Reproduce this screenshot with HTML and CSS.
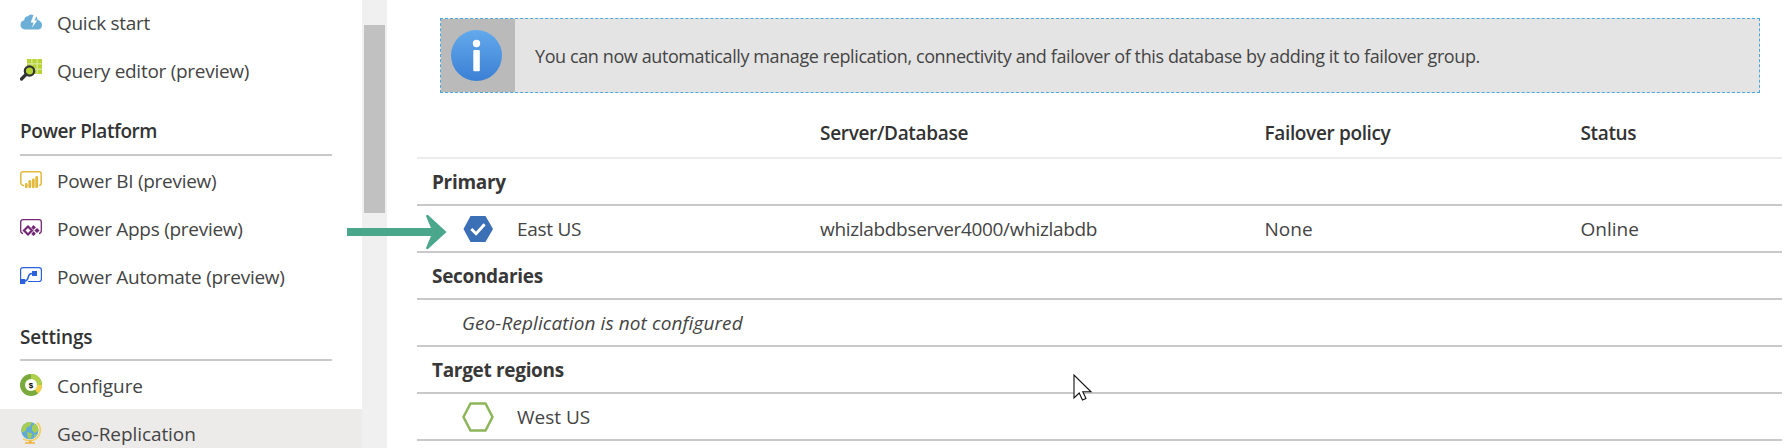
FILE: index.html
```
<!DOCTYPE html>
<html lang="en">
<head>
<meta charset="utf-8">
<title>Geo-Replication</title>
<link rel="stylesheet" href="styles.css">
</head>
<body>
<div class="portal">
  <nav class="sidebar">
    <a class="item"><svg class="icon" viewBox="0 0 22 22"><path fill="#6bafd6" d="M5 18.500a5 4.700 0 0 1-.8-9.200Q4.500 5.500 8 5.300 10 2.500 13 4l2 .2q2.500 1.500 2.600 4.600Q22 10.500 22 14q0 4-3.700 4.500z"/><path fill="#fff" d="M13.500 4 10.700 11.500h3l-2 5.500 5.600-7.600h-2.800L17 4z"/></svg><span>Quick start</span></a>
    <a class="item"><svg class="icon" viewBox="0 0 22 22"><path fill="#d5e58c" d="M7 0h15v15H7z"/><path fill="#b8d432" d="M7 0h4v4H7zM12.500 0h4v4h-4zM18 0h4v4h-4zM7 5.500h4v4H7zM12.500 5.500h4v4h-4zM18 5.500h4v4h-4zM12.500 11h4v4h-4zM18 11h4v4h-4z"/><circle cx="9.500" cy="12" r="4.700" fill="#b5d334" stroke="#333" stroke-width="2.200"/><path d="M6 15.500 1.500 20" stroke="#333" stroke-width="3.200" stroke-linecap="round"/></svg><span>Query editor (preview)</span></a>
    <h2 class="group">Power Platform</h2>
    <a class="item"><svg class="icon" viewBox="0 0 22 22"><path fill="none" stroke="#e3b93c" stroke-width="1.500" d="M4 16.500q-3.200 0-3.200-3V5Q.8 2.800 3 2.800h16q2.200 0 2.200 2.200v8.500q0 3-2 3"/><path fill="none" stroke="#e3b93c" stroke-width="2.800" stroke-linecap="round" d="M6.300 15.500v2.300M9.800 12.500v5.300M13.300 11v6.800M16.700 8.500v9.300"/></svg><span>Power BI (preview)</span></a>
    <a class="item"><svg class="icon" viewBox="0 0 22 22"><path fill="none" stroke="#742774" stroke-width="1.300" d="M3 16.500q-2.300-.3-2.300-3V5Q.7 2.700 3 2.700h16q2.300 0 2.300 2.300v8.500q0 2.700-2.300 3"/><path fill="none" stroke="#742774" stroke-width="2.200" d="m8 9.500 4 4-4 4-4-4z"/><path fill="#742774" d="m13.500 8 2.400 2.400-2.400 2.400-2.200-2.200zM17 10.900l2.600 2.600-2.600 2.600-2.600-2.600zM13.500 14.300l2.400 2.400-2.400 2.400-2.200-2.200z"/></svg><span>Power Apps (preview)</span></a>
    <a class="item"><svg class="icon" viewBox="0 0 22 22"><path fill="none" stroke="#2a62dd" stroke-width="1.200" d="M.6 14V5Q.6 2.700 3 2.700h16q2.400 0 2.400 2.300v9q0 2.500-2.400 2.500H8"/><path fill="none" stroke="#2a62dd" stroke-width="1.500" d="M4 16.500q3.500-.5 4.300-4.500T13 8.500"/><path fill="#2a62dd" d="M12 6h5v5h-5zM0 14h5.200v5H0z"/></svg><span>Power Automate (preview)</span></a>
    <h2 class="group group-settings">Settings</h2>
    <a class="item item-wide"><svg class="icon" viewBox="0 0 22 22"><circle cx="11" cy="11" r="11" fill="#7aa93c"/><path fill="#b0cf4a" d="M11 0a11 11 0 0 1 11 11H11z"/><path fill="#f2d04a" d="M22 11a11 11 0 0 1-4 8.500L11 11z"/><circle cx="11" cy="11" r="6" fill="#fff"/><text x="11" y="14" class="dollar">$</text></svg><span>Configure</span></a>
    <a class="item item-wide item-active"><svg class="icon" viewBox="0 0 22 22"><path fill="none" stroke="#f3cf62" stroke-width="1.700" d="M17 .8q4 3 3.200 9Q18.500 18 10 18.700q-4 0-7-1.700"/><circle cx="9.800" cy="8.600" r="8.600" fill="#5fabd3"/><path fill="#a6cc56" d="M3 3.200Q7-.8 12 .4L10 4 7 5.500 5.500 9 2 10.500Q.6 7 3 3.200zM12 4l3-2.500q3.500 2.500 3.500 7L15 11l-3-2.500zM7 10l5 1.500-1 5H8zM14 12.500h3l-3 3z"/><path fill="#eeb13e" d="M9 18.500h2.500v1.700H15v1.600H5v-1.600h4z"/></svg><span>Geo-Replication</span></a>
  </nav>
  <div class="scrollbar"><div class="thumb"></div></div>
  <main class="content">
    <div class="banner">
      <div class="banner-icon"><svg width="51" height="51" viewBox="0 0 51 51"><defs><linearGradient id="blue" x1="0" y1="0" x2="0" y2="1"><stop offset="0" stop-color="#63a9ec"/><stop offset="1" stop-color="#3b80d4"/></linearGradient></defs><circle cx="25.500" cy="25.500" r="25.500" fill="url(#blue)"/><circle cx="25.500" cy="13.500" r="3.700" fill="#fff"/><rect x="22.300" y="20" width="6.500" height="21.300" rx="1" fill="#fff"/></svg></div>
      <p class="banner-text">You can now automatically manage replication, connectivity and failover of this database by adding it to failover group.</p>
    </div>
    <div class="grid">
      <div class="row head"><span class="server">Server/Database</span><span class="policy">Failover policy</span><span class="status">Status</span></div>
      <div class="row section"><span>Primary</span></div>
      <div class="row"><span class="region region-current"><svg class="hex" viewBox="0 0 32 32"><path fill="#3b6fb6" d="M8.500 3h15L31 16l-7.500 13h-15L1.500 16z"/><path fill="none" stroke="#fff" stroke-width="2.900" d="m9.300 16 4.800 4.700 8.500-9.500"/></svg><span>East US</span></span><span class="server">whizlabdbserver4000/whizlabdb</span><span class="policy">None</span><span class="status">Online</span></div>
      <div class="row section"><span>Secondaries</span></div>
      <div class="row empty"><span>Geo-Replication is not configured</span></div>
      <div class="row section"><span>Target regions</span></div>
      <div class="row"><span class="region"><svg class="hex" viewBox="0 0 32 32"><path fill="none" stroke="#8db55a" stroke-width="2.500" d="M8.500 2.500h15L30.500 16l-7 13.500h-15L1.500 16z"/></svg><span>West US</span></span></div>
    </div>
  </main>
</div>
<svg class="arrow" viewBox="0 0 100 36"><path fill="#4aa78c" d="M0 14h84L79 2q0-1.500 2-1L99.500 18 81 35q-2 .5-2-1l5-12H0z"/></svg>
<svg class="cursor" viewBox="0 0 20 28"><path fill="#fff" stroke="#111" stroke-width="1.100" d="M1 1v23l5.200-5 3.300 7 3.500-1.500-3.200-6.700H18z"/></svg>
</body>
</html>
```
FILE: styles.css
```
* { box-sizing: border-box; }
body { margin: 0; height: 448px; overflow: hidden; background: #fff; color: #444; font: 19px/26px "Open Sans", "Noto Sans", sans-serif; position: relative; }
.portal { display: flex; height: 448px; overflow: hidden; }
.sidebar { width: 362px; height: 450px; margin-top: -2px; flex: none; }
.item { display: flex; align-items: center; gap: 15px; height: 48px; padding-left: 20px; white-space: nowrap; letter-spacing: -0.28px; }
.item span { padding-top: 2px; }
.item-wide { letter-spacing: -0.08px; }
.item-active { background: #ecebea; }
.icon { width: 22px; height: 22px; flex: none; }
.dollar { font: bold 8px "Liberation Sans", sans-serif; text-anchor: middle; }
.group { margin: 0 30px 0 20px; height: 62px; padding-top: 24px; border-bottom: 2px solid #c9c9c9; font-size: 19px; line-height: 26px; font-weight: 600; color: #333; letter-spacing: -0.44px; }
.group-settings { height: 61px; letter-spacing: -0.15px; }
.scrollbar { width: 25px; flex: none; background: #f0f0f0; padding: 25px 2px 0; }
.thumb { height: 188px; background: #c1c1c1; }
.content { flex: 1; padding: 18px 7px 0 30px; }
.banner { display: flex; height: 75px; margin: 0 22px 0 23px; border: 1px dashed #4aa9d8; background: #e4e4e4; }
.banner-icon { width: 74px; background: #bababa; display: flex; align-items: center; justify-content: center; padding-right: 4px; }
.banner-text { margin: 0; padding: 24px 0 0 20px; font-size: 18px; line-height: 26px; white-space: nowrap; letter-spacing: -0.4px; }
.row { display: grid; grid-template-columns: 403px 444.500px 316px 1fr; align-items: center; height: 47px; border-bottom: 2px solid #c9c9c9; white-space: nowrap; }
.head { height: 66px; padding-top: 15px; border-color: #ececec; font-weight: 600; color: #333; letter-spacing: -0.35px; }
.server { grid-column: 2; letter-spacing: -0.32px; }
.policy { grid-column: 3; }
.status { grid-column: 4; }
.section { padding-left: 15px; font-weight: 700; color: #383838; letter-spacing: -0.32px; }
.region { display: flex; align-items: center; padding-left: 45px; gap: 23px; }
.region-current { letter-spacing: -0.3px; }
.hex { width: 32px; height: 32px; }
.empty { padding-left: 45px; font-style: italic; letter-spacing: 0.1px; }
.arrow { position: absolute; left: 347px; top: 214px; width: 100px; height: 36px; }
.cursor { position: absolute; left: 1073px; top: 374px; width: 20px; height: 28px; }
```
